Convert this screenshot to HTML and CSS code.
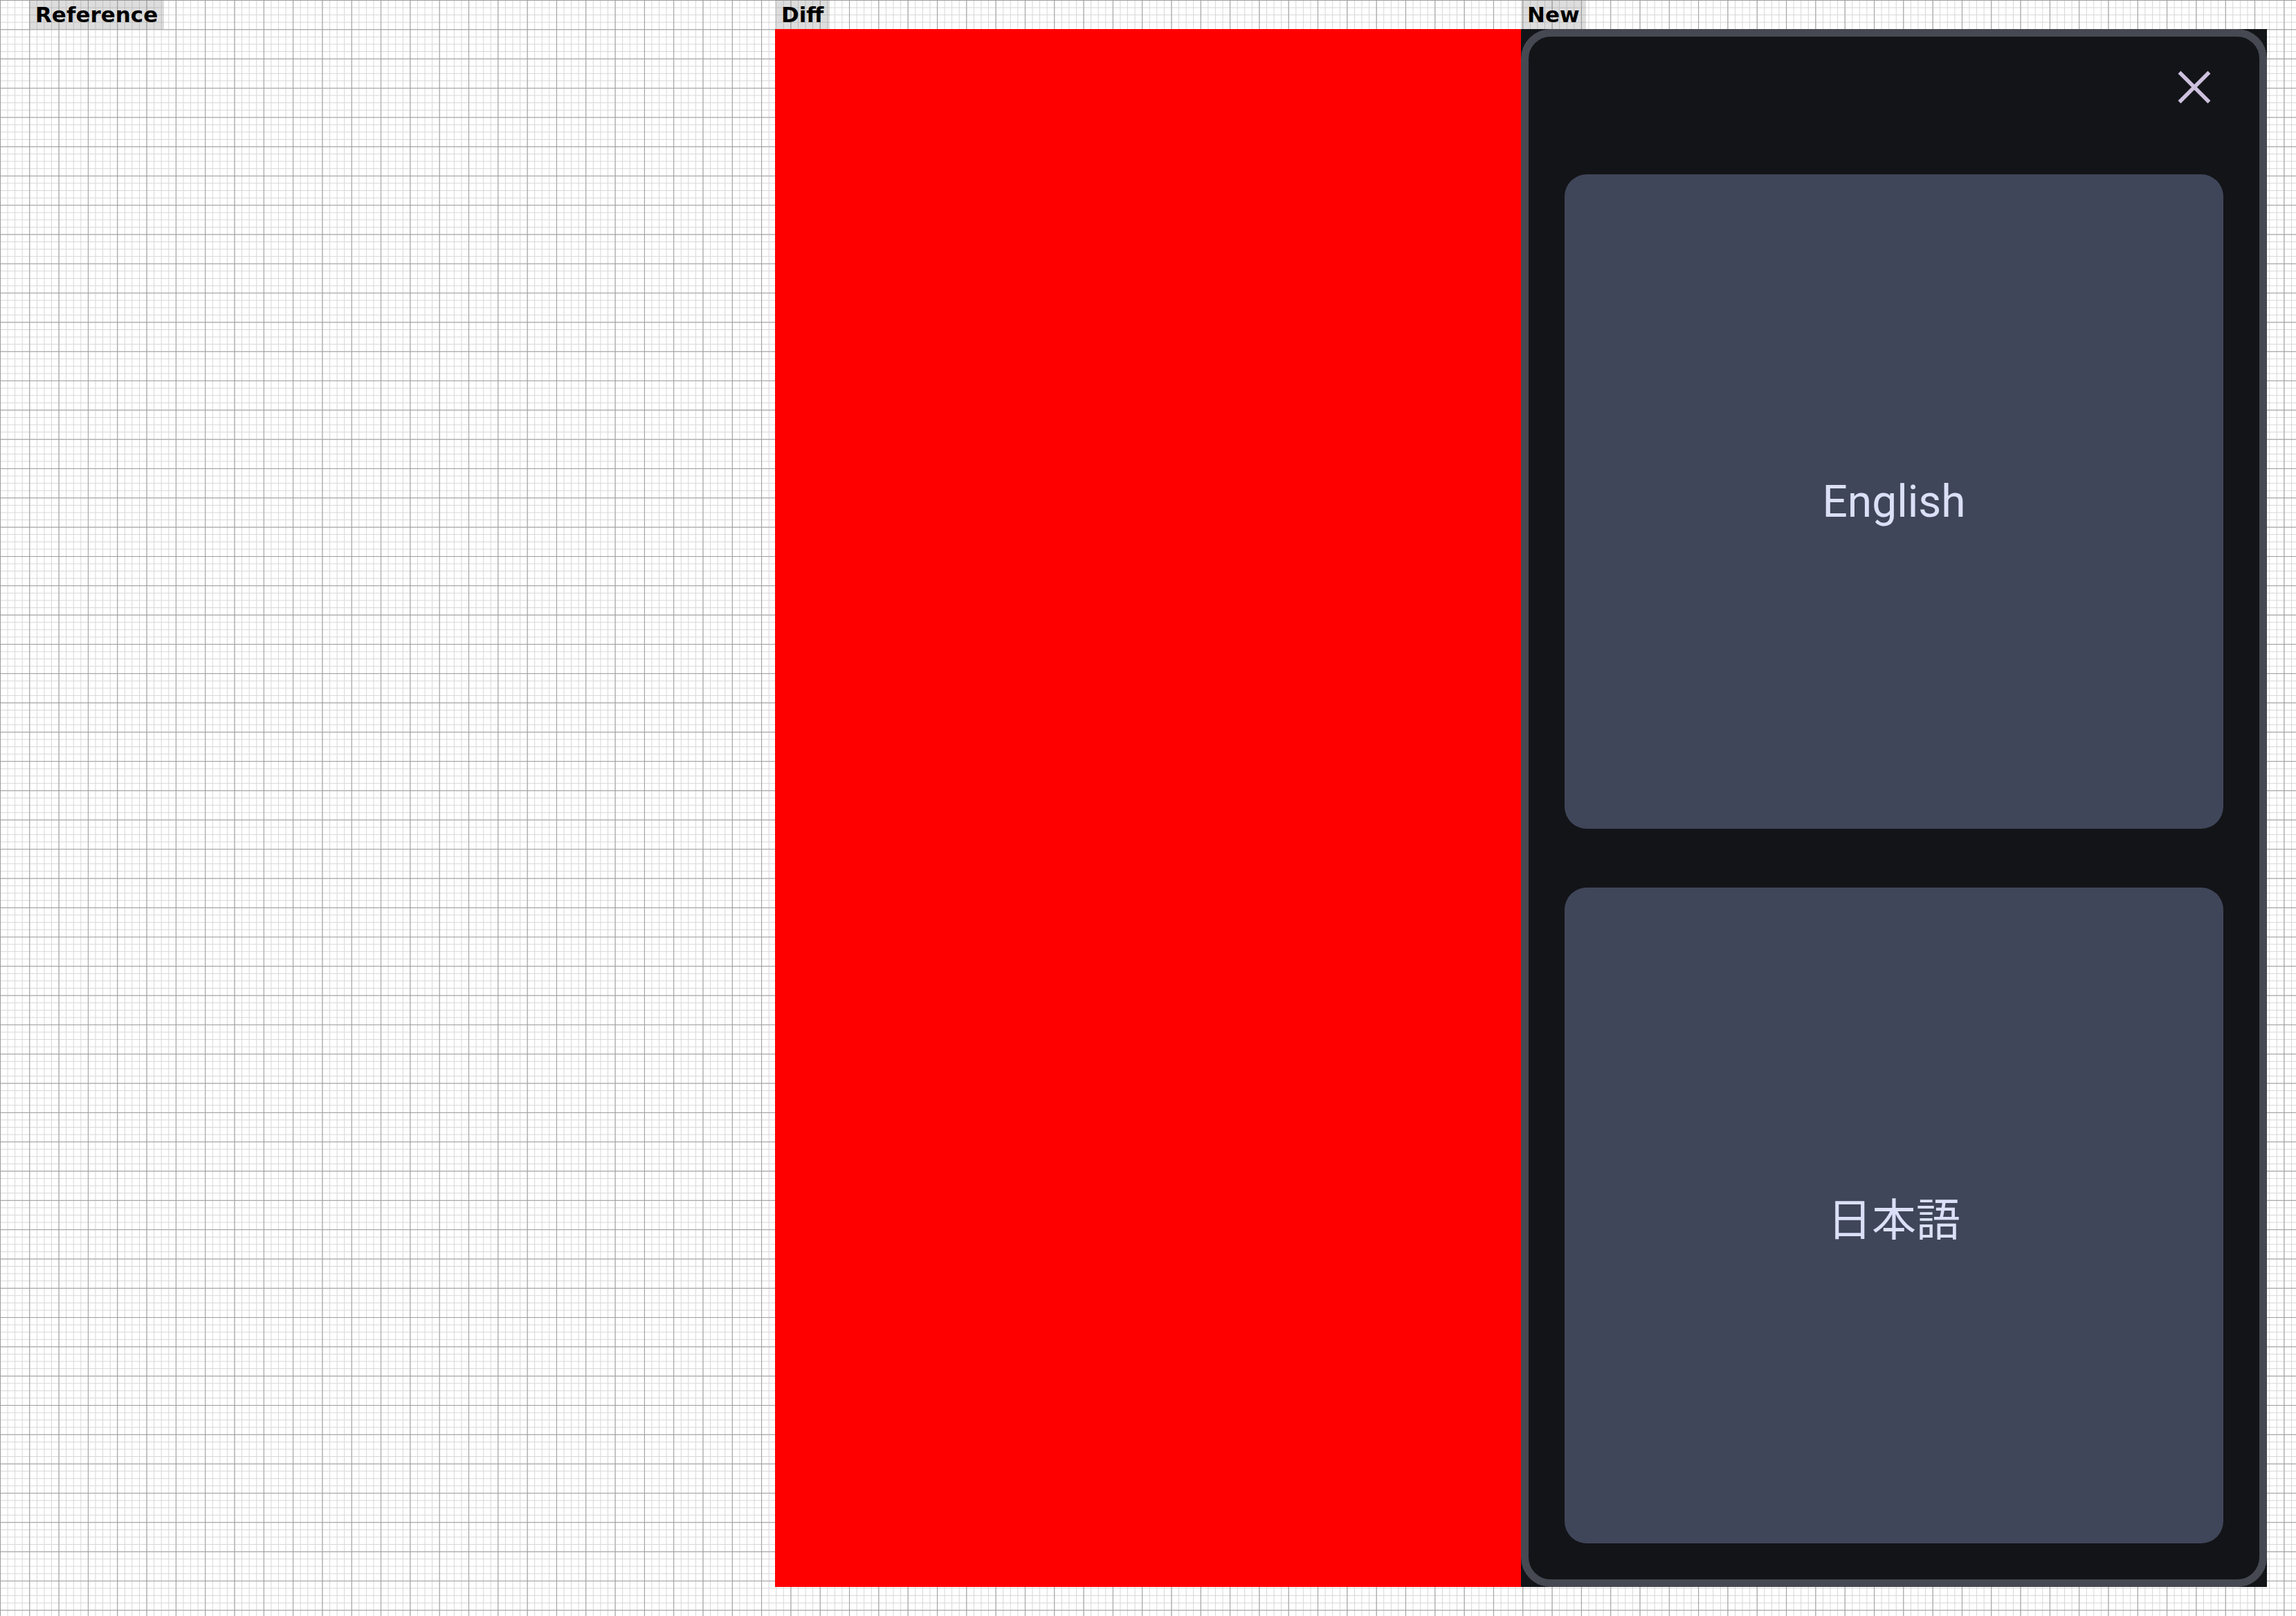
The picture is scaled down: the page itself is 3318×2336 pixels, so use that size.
FILE: index.html
```html
<!DOCTYPE html>
<html lang="en">
<head>
<meta charset="utf-8">
<title>Reference / Diff / New</title>
<link rel="stylesheet" href="styles.css">
</head>
<body>
<div class="stage">
  <section class="col">
    <div class="label">Reference</div>
    <div class="pane pane-ref"></div>
  </section>
  <section class="col">
    <div class="label">Diff</div>
    <div class="pane pane-diff"></div>
  </section>
  <section class="col">
    <div class="label">New</div>
    <div class="pane pane-new">
      <div class="card">
        <div class="card-head">
          <button class="close" aria-label="Close">
            <svg width="48" height="48" viewBox="0 0 48 48" aria-hidden="true">
              <path d="M2.5 2.5 L45.5 45.5 M45.5 2.5 L2.5 45.5" stroke="#cdc1de" stroke-width="5.5" fill="none"/>
            </svg>
          </button>
        </div>
        <div class="langs">
          <button class="lang">English</button>
          <button class="lang lang-ja" lang="ja">日本語</button>
        </div>
      </div>
    </div>
  </section>
</div>
</body>
</html>
```

FILE: styles.css
```css
html, body {
  margin: 0;
  padding: 0;
}

body {
  width: 3318px;
  height: 2336px;
  overflow: hidden;
  background-color: #ffffff;
  background-image:
    linear-gradient(to right, #9c9c9c 1px, transparent 1px),
    linear-gradient(to bottom, #9c9c9c 1px, transparent 1px),
    linear-gradient(to right, #d6d6d6 1px, transparent 1px),
    linear-gradient(to bottom, #d6d6d6 1px, transparent 1px);
  background-size:
    42.32px 42.32px,
    42.32px 42.32px,
    10.58px 10.58px,
    10.58px 10.58px;
  font-family: "DejaVu Sans", sans-serif;
}

.stage {
  display: flex;
  padding-left: 42px;
}

.col {
  width: 1078px;
  display: flex;
  flex-direction: column;
}

.label {
  align-self: flex-start;
  height: 42px;
  line-height: 42px;
  padding: 0 9px;
  background: rgba(128, 128, 128, 0.27);
  color: #000;
  font-family: "DejaVu Sans", sans-serif;
  font-weight: bold;
  font-size: 31px;
}

.pane {
  height: 2252px;
  box-sizing: border-box;
}

.pane-ref {
  background: transparent;
}

.pane-diff {
  background: #ff0000;
}

.pane-new {
  background: #131418;
  display: flex;
}

.card {
  flex: 1;
  box-sizing: border-box;
  border: 11px solid #464852;
  border-radius: 43px;
  background: #131418;
  padding: 0 52px 52px;
  display: flex;
  flex-direction: column;
}

.card-head {
  height: 199px;
  display: flex;
  justify-content: flex-end;
  align-items: flex-start;
  padding-top: 49px;
  padding-right: 18px;
  box-sizing: border-box;
}

.close {
  width: 48px;
  height: 48px;
  padding: 0;
  margin: 0;
  border: 0;
  background: transparent;
  display: block;
  cursor: pointer;
}

.close svg {
  display: block;
}

.langs {
  flex: 1;
  display: flex;
  flex-direction: column;
  gap: 85px;
}

.lang {
  flex: 1;
  border: 0;
  margin: 0;
  padding: 0;
  border-radius: 32px;
  background: #404659;
  color: #dbe0f8;
  font-family: Roboto, "Noto Sans CJK JP", sans-serif;
  font-size: 64px;
  display: flex;
  align-items: center;
  justify-content: center;
}

.lang-ja {
  font-family: "Noto Sans CJK JP", sans-serif;
  padding-top: 2px;
}
```
